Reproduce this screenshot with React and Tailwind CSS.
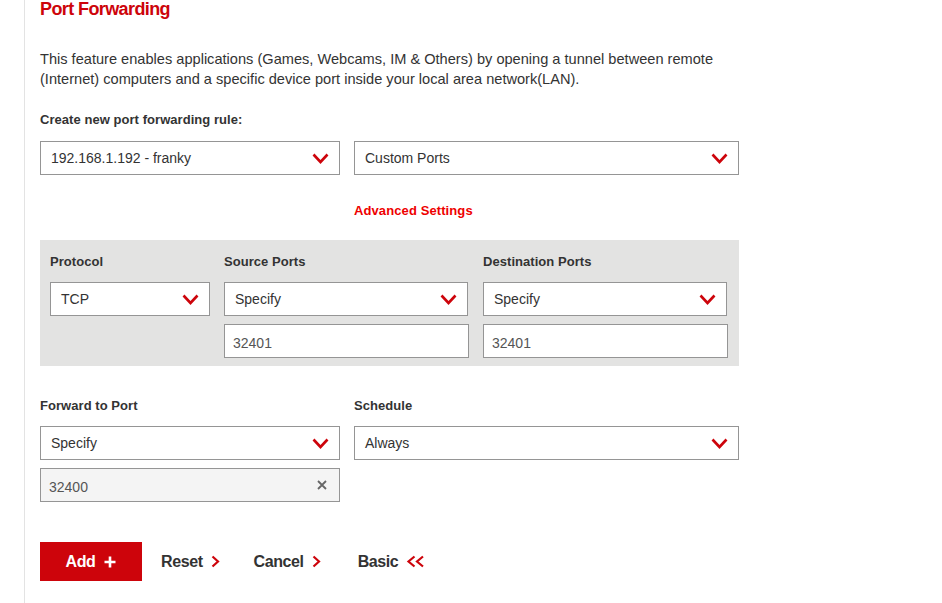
import React from 'react';

const Chevron = () => (
  <svg width="17" height="11" viewBox="0 0 17 11" fill="none" className="shrink-0">
    <path d="M1.5 1.5 L8.5 9 L15.5 1.5" stroke="#cd040b" strokeWidth="2.6" strokeLinejoin="miter" />
  </svg>
);

const Arrow = () => (
  <svg width="9" height="13" viewBox="0 0 9 13" fill="none">
    <path d="M1.5 1.5 L7 6.5 L1.5 11.5" stroke="#cd040b" strokeWidth="2.2" />
  </svg>
);

const DoubleArrow = () => (
  <svg width="19" height="13" viewBox="0 0 19 13" fill="none">
    <path d="M8.5 1.5 L2.5 6.5 L8.5 11.5 M17 1.5 L11 6.5 L17 11.5" stroke="#cd040b" strokeWidth="2.2" />
  </svg>
);

const Select = ({ value, className = '' }) => (
  <div className={`h-[34px] bg-white border border-[#959595] flex items-center justify-between pl-[10px] pr-[10px] pt-[1px] text-[14px] text-[#333] ${className}`}>
    <span>{value}</span>
    <Chevron />
  </div>
);

const Input = ({ value, className = '' }) => (
  <div className={`h-[34px] bg-white border border-[#959595] flex items-center pl-[8px] pt-[4px] text-[14px] text-[#555] ${className}`}>
    {value}
  </div>
);

const Label = ({ children, className = '' }) => (
  <div className={`text-[13px] font-bold text-[#333] tracking-[0.05px] ${className}`}>{children}</div>
);

const LinkButton = ({ children, icon, className = '' }) => (
  <div className={`flex items-center gap-[8px] text-[16px] font-bold text-[#333] tracking-[-0.4px] ${className}`}>
    <span>{children}</span>
    {icon}
  </div>
);

export default function App() {
  return (
    <div className="w-[942px] h-[603px] overflow-hidden bg-white flex" style={{ fontFamily: '"Liberation Sans", Arial, sans-serif' }}>
      <div className="w-[25px] shrink-0 border-r border-[#e3e3e3]" />
      <div className="pl-[15px] flex flex-col">
        <h1 className="text-[18px] font-bold text-[#cd040b] tracking-[-0.6px] leading-[20px] mt-[-1px]">Port Forwarding</h1>

        <p className="mt-[30px] text-[14.6px] leading-[20px] text-[#333] w-[720px]">
          This feature enables applications (Games, Webcams, IM &amp; Others) by opening a tunnel between remote (Internet) computers and a specific device port inside your local area network(LAN).
        </p>

        <Label className="mt-[21px]">Create new port forwarding rule:</Label>

        <div className="mt-[11px] flex gap-[14px]">
          <Select value="192.168.1.192 - franky" className="w-[300px]" />
          <Select value="Custom Ports" className="w-[385px]" />
        </div>

        <div className="mt-[23px] pl-[314px]">
          <span className="text-[13px] font-bold text-[#ee0000] tracking-[0.1px]">Advanced Settings</span>
        </div>

        <div className="mt-[18px] w-[699px] h-[126px] bg-[#e3e3e2] pl-[10px] pt-[12px] flex gap-[14px]">
          <div className="w-[160px]">
            <Label>Protocol</Label>
            <Select value="TCP" className="mt-[11px]" />
          </div>
          <div className="w-[245px]">
            <Label>Source Ports</Label>
            <Select value="Specify" className="mt-[11px] w-[244px]" />
            <Input value="32401" className="mt-[8px]" />
          </div>
          <div className="w-[245px]">
            <Label>Destination Ports</Label>
            <Select value="Specify" className="mt-[11px] w-[244px]" />
            <Input value="32401" className="mt-[8px]" />
          </div>
        </div>

        <div className="mt-[30px] flex gap-[14px]">
          <div className="w-[300px]">
            <Label>Forward to Port</Label>
            <Select value="Specify" className="mt-[11px]" />
            <div className="mt-[8px] h-[34px] bg-[#f4f4f4] border border-[#959595] flex items-center justify-between pl-[8px] pr-[12px] text-[14px] text-[#555]">
              <span className="pt-[4px]">32400</span>
              <svg width="10" height="10" viewBox="0 0 10 10">
                <path d="M1 1 L9 9 M9 1 L1 9" stroke="#666" strokeWidth="1.8" />
              </svg>
            </div>
          </div>
          <div className="w-[385px]">
            <Label>Schedule</Label>
            <Select value="Always" className="mt-[11px]" />
          </div>
        </div>

        <div className="mt-[40px] flex items-center">
          <button className="w-[102px] h-[39px] bg-[#cd040b] text-white text-[16px] font-bold tracking-[-0.4px] flex items-center justify-center gap-[9px]">
            <span>Add</span>
            <svg width="12" height="12" viewBox="0 0 12 12">
              <path d="M6 0.5 V11.5 M0.5 6 H11.5" stroke="#fff" strokeWidth="2.6" />
            </svg>
          </button>
          <LinkButton icon={<Arrow />} className="ml-[19px]">Reset</LinkButton>
          <LinkButton icon={<Arrow />} className="ml-[34px]">Cancel</LinkButton>
          <LinkButton icon={<DoubleArrow />} className="ml-[37px]">Basic</LinkButton>
        </div>
      </div>
    </div>
  );
}
